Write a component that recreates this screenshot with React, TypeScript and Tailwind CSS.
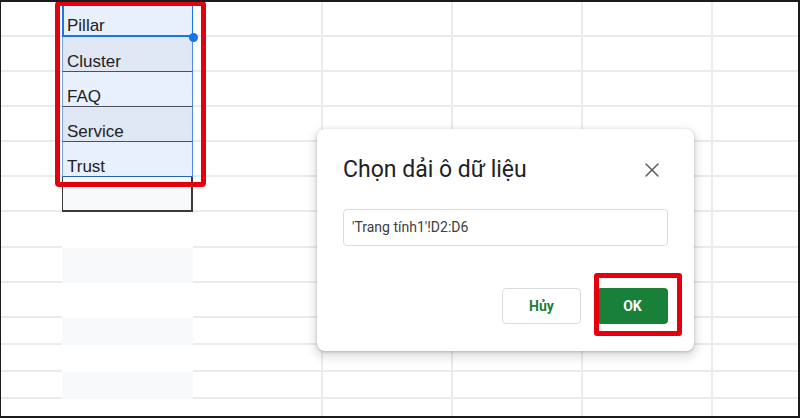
import { X } from "lucide-react";

const values = ["Pillar", "Cluster", "FAQ", "Service", "Trust"];
const rowCount = 13;
const colCount = 7;

function sheetCell(row: number, col: number) {
    // column D holds the selected range and the banded rows below it
    if (col === 1) {
        if (row === 0) {
            return (
                <div key={`${row}-${col}`} className="flex items-end bg-[#e8f0fe] border-l-2 border-b-2 border-r border-[#1a73e8] pl-[3px]">
                    <span className="text-[17px] leading-[18px] text-[#202124]">{values[0]}</span>
                </div>
            );
        }
        if (row < 5) {
            return (
                <div
                    key={`${row}-${col}`}
                    className={`flex items-end border-l border-l-[#7fa3de] border-r border-r-[#4d8ae8] border-b pl-[4px] ${row % 2 === 1 ? "bg-[#dfe7f4]" : "bg-[#e8f0fe]"} ${row === 4 ? "border-b-[#2c62b8]" : "border-b-[#4b515c]"}`}
                >
                    <span className="text-[17px] leading-[18px] text-[#202124]">{values[row]}</span>
                </div>
            );
        }
        if (row === 5) {
            return <div key={`${row}-${col}`} className="bg-[#f8f9fa] border-l border-r-2 border-b-2 border-[#3a3a3a]" />;
        }
        return <div key={`${row}-${col}`} className={row % 2 === 1 ? "bg-[#f8f9fa]" : "bg-white"} />;
    }

    const right = col >= 2 && col <= 5 ? "border-r-2" : "";
    const bottom = row < rowCount - 1 ? "border-b-2" : "";
    return <div key={`${row}-${col}`} className={`border-[#ebebeb] ${right} ${bottom}`} />;
}

function RangeDialog() {
    return (
        <div className="absolute left-[316px] top-[127px] w-[377px] h-[222px] rounded-[8px] bg-white shadow-[0_1px_3px_rgba(60,64,67,0.3),0_4px_8px_3px_rgba(60,64,67,0.15)] font-['Roboto',sans-serif]">
            <div className="flex flex-col px-[26px] pt-[25px] pb-[27px]">
                <div className="flex items-center justify-between h-[32px]">
                    <h2 className="text-[23px] leading-[32px] text-[#202124] font-normal">Chọn dải ô dữ liệu</h2>
                    <X size={24} strokeWidth={1.6} className="text-[#5f6368] mr-[4px]" />
                </div>
                <div className="mt-[23px] h-[37px] flex items-center border border-[#dadce0] rounded-[4px] px-[8px] text-[14px] text-[#3c4043]">
                    'Trang tính1'!D2:D6
                </div>
                <div className="mt-[42px] flex justify-end gap-[16px]">
                    <button className="w-[79px] h-[36px] rounded-[4px] border border-[#dadce0] bg-white text-[14px] font-bold text-[#188038]">
                        Hủy
                    </button>
                    <button className="w-[71px] h-[36px] rounded-[4px] bg-[#188038] text-[14px] font-bold text-white">
                        OK
                    </button>
                </div>
            </div>
        </div>
    );
}

export default function App() {
    const cells = [];
    for (let r = 0; r < rowCount; r++) {
        for (let c = 0; c < colCount; c++) {
            cells.push(sheetCell(r, c));
        }
    }

    return (
        <div className="relative w-[800px] h-[418px] overflow-hidden bg-white border-l border-t-2 border-r-2 border-b-2 border-[#1b1b1b] font-['Liberation_Sans',Arial,sans-serif]">
            <div className="grid h-full grid-cols-[61px_131px_130px_130px_130px_130px_1fr] grid-rows-[35px_35px_35px_35px_35px_35px_36px_35px_35px_27px_27px_27px_1fr]">
                {cells}
            </div>

            {/* fill handle */}
            <div className="absolute left-[188px] top-[31px] w-[9px] h-[9px] rounded-full bg-[#1a73e8]" />

            <RangeDialog />

            {/* red highlight boxes */}
            <div className="absolute left-[54px] top-[-1px] w-[151px] h-[186px] rounded-[4px] border-[5px] border-[#e4000f]" />
            <div className="absolute left-[593px] top-[271px] w-[88px] h-[63px] rounded-[3px] border-[5px] border-[#e4000f]" />
        </div>
    );
}
